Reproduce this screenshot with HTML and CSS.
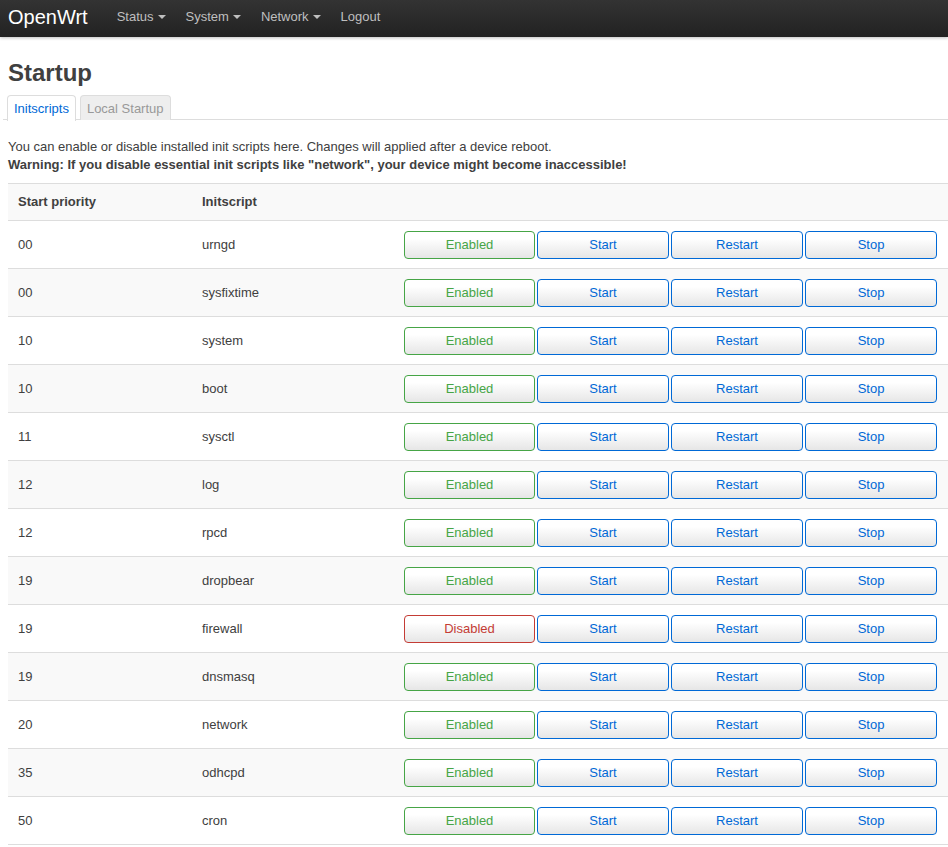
FILE: index.html
```html
<!DOCTYPE html>
<html>
<head>
<meta charset="utf-8">
<link rel="stylesheet" href="styles.css">
</head>
<body>
<header class="topbar">
  <a class="brand">OpenWrt</a>
  <ul class="nav">
    <li><a>Status<span class="caret"></span></a></li>
    <li><a>System<span class="caret"></span></a></li>
    <li><a>Network<span class="caret"></span></a></li>
    <li><a>Logout</a></li>
  </ul>
</header>
<main class="container">
  <h2 class="title">Startup</h2>
  <ul class="tabs">
    <li class="tab active">Initscripts</li>
    <li class="tab">Local Startup</li>
  </ul>
  <div class="desc">You can enable or disable installed init scripts here. Changes will applied after a device reboot.<br><strong>Warning: If you disable essential init scripts like "network", your device might become inaccessible!</strong></div>
  <table class="table">
    <thead>
      <tr><th class="c1">Start priority</th><th class="c2">Initscript</th><th class="c3"></th></tr>
    </thead>
    <tbody>
      <tr><td>00</td><td>urngd</td><td><div class="btns"><button class="btn ok">Enabled</button><button class="btn">Start</button><button class="btn">Restart</button><button class="btn">Stop</button></div></td></tr>
      <tr><td>00</td><td>sysfixtime</td><td><div class="btns"><button class="btn ok">Enabled</button><button class="btn">Start</button><button class="btn">Restart</button><button class="btn">Stop</button></div></td></tr>
      <tr><td>10</td><td>system</td><td><div class="btns"><button class="btn ok">Enabled</button><button class="btn">Start</button><button class="btn">Restart</button><button class="btn">Stop</button></div></td></tr>
      <tr><td>10</td><td>boot</td><td><div class="btns"><button class="btn ok">Enabled</button><button class="btn">Start</button><button class="btn">Restart</button><button class="btn">Stop</button></div></td></tr>
      <tr><td>11</td><td>sysctl</td><td><div class="btns"><button class="btn ok">Enabled</button><button class="btn">Start</button><button class="btn">Restart</button><button class="btn">Stop</button></div></td></tr>
      <tr><td>12</td><td>log</td><td><div class="btns"><button class="btn ok">Enabled</button><button class="btn">Start</button><button class="btn">Restart</button><button class="btn">Stop</button></div></td></tr>
      <tr><td>12</td><td>rpcd</td><td><div class="btns"><button class="btn ok">Enabled</button><button class="btn">Start</button><button class="btn">Restart</button><button class="btn">Stop</button></div></td></tr>
      <tr><td>19</td><td>dropbear</td><td><div class="btns"><button class="btn ok">Enabled</button><button class="btn">Start</button><button class="btn">Restart</button><button class="btn">Stop</button></div></td></tr>
      <tr><td>19</td><td>firewall</td><td><div class="btns"><button class="btn bad">Disabled</button><button class="btn">Start</button><button class="btn">Restart</button><button class="btn">Stop</button></div></td></tr>
      <tr><td>19</td><td>dnsmasq</td><td><div class="btns"><button class="btn ok">Enabled</button><button class="btn">Start</button><button class="btn">Restart</button><button class="btn">Stop</button></div></td></tr>
      <tr><td>20</td><td>network</td><td><div class="btns"><button class="btn ok">Enabled</button><button class="btn">Start</button><button class="btn">Restart</button><button class="btn">Stop</button></div></td></tr>
      <tr><td>35</td><td>odhcpd</td><td><div class="btns"><button class="btn ok">Enabled</button><button class="btn">Start</button><button class="btn">Restart</button><button class="btn">Stop</button></div></td></tr>
      <tr><td>50</td><td>cron</td><td><div class="btns"><button class="btn ok">Enabled</button><button class="btn">Start</button><button class="btn">Restart</button><button class="btn">Stop</button></div></td></tr>
    </tbody>
  </table>
</main>
</body>
</html>
```

FILE: styles.css
```css
* { box-sizing: border-box; }
html, body {
  margin: 0;
  padding: 0;
  background: #fff;
  font-family: "Liberation Sans", Arial, Helvetica, sans-serif;
  font-size: 13px;
  line-height: 18px;
  color: #404040;
}
.topbar {
  height: 37px;
  background: linear-gradient(#333333, #222222);
  box-shadow: 0 1px 3px rgba(0,0,0,0.25);
  display: flex;
  align-items: center;
}
.brand {
  color: #ffffff;
  font-size: 20px;
  line-height: 37px;
  padding: 0 20px 0 8px;
  margin-top: -3px;
}
.nav {
  list-style: none;
  margin: 0;
  padding: 0;
  display: flex;
}
.nav a {
  display: flex;
  align-items: center;
  color: #bfbfbf;
  padding: 0 10px;
  line-height: 37px;
  margin-top: -4px;
}
.nav li:first-child a {
  margin-left: -1px;
}
.caret {
  display: inline-block;
  width: 0;
  height: 0;
  margin-left: 4px;
  margin-top: 1px;
  border-left: 4px solid transparent;
  border-right: 4px solid transparent;
  border-top: 4px solid #bfbfbf;
}
.container {
  padding-left: 8px;
}
.title {
  margin: 18px 0 4px;
  font-size: 24px;
  line-height: 36px;
  font-weight: bold;
  color: #404040;
}
.tabs {
  list-style: none;
  margin: 0 0 0 -5px;
  padding: 0 0 0 4px;
  display: flex;
  gap: 4px;
  border-bottom: 1px solid #dddddd;
  height: 25px;
}
.tab {
  height: 25px;
  padding: 0 6px;
  line-height: 25px;
  border: 1px solid #dddddd;
  border-bottom: none;
  border-radius: 4px 4px 0 0;
  background: #eeeeee;
  color: #999999;
  font-size: 13px;
}
.tab.active {
  background: #ffffff;
  color: #0069d6;
  position: relative;
  margin-bottom: -1px;
  height: 26px;
}
.desc {
  margin: 18px 0 9px;
}
.table {
  border-collapse: collapse;
  width: 940px;
}
.table th {
  text-align: left;
  font-weight: bold;
  height: 37px;
  padding: 0 10px;
  background: #f9f9f9;
  border-top: 1px solid #dddddd;
  vertical-align: middle;
}
.c1 { width: 184px; }
.c2 { width: 202px; }
.table td {
  height: 48px;
  padding: 0 10px;
  border-top: 1px solid #dddddd;
  border-bottom: 1px solid #dddddd;
  vertical-align: middle;
}
.table tbody tr:nth-child(even) td {
  background: #f9f9f9;
}
.btns {
  display: grid;
  grid-template-columns: 131px 132px 132px 132px;
  gap: 2px;
}
.btn {
  height: 28px;
  margin: 0;
  padding: 0 0 1px;
  font-family: "Liberation Sans", Arial, Helvetica, sans-serif;
  font-size: 13px;
  color: #0069d6;
  border: 1px solid #0069d6;
  border-radius: 4px;
  background: linear-gradient(#ffffff, #ffffff 25%, #e6e6e6);
  cursor: pointer;
}
.btn.ok {
  color: #46a546;
  border-color: #46a546;
}
.btn.bad {
  color: #c43c35;
  border-color: #c43c35;
}
```
